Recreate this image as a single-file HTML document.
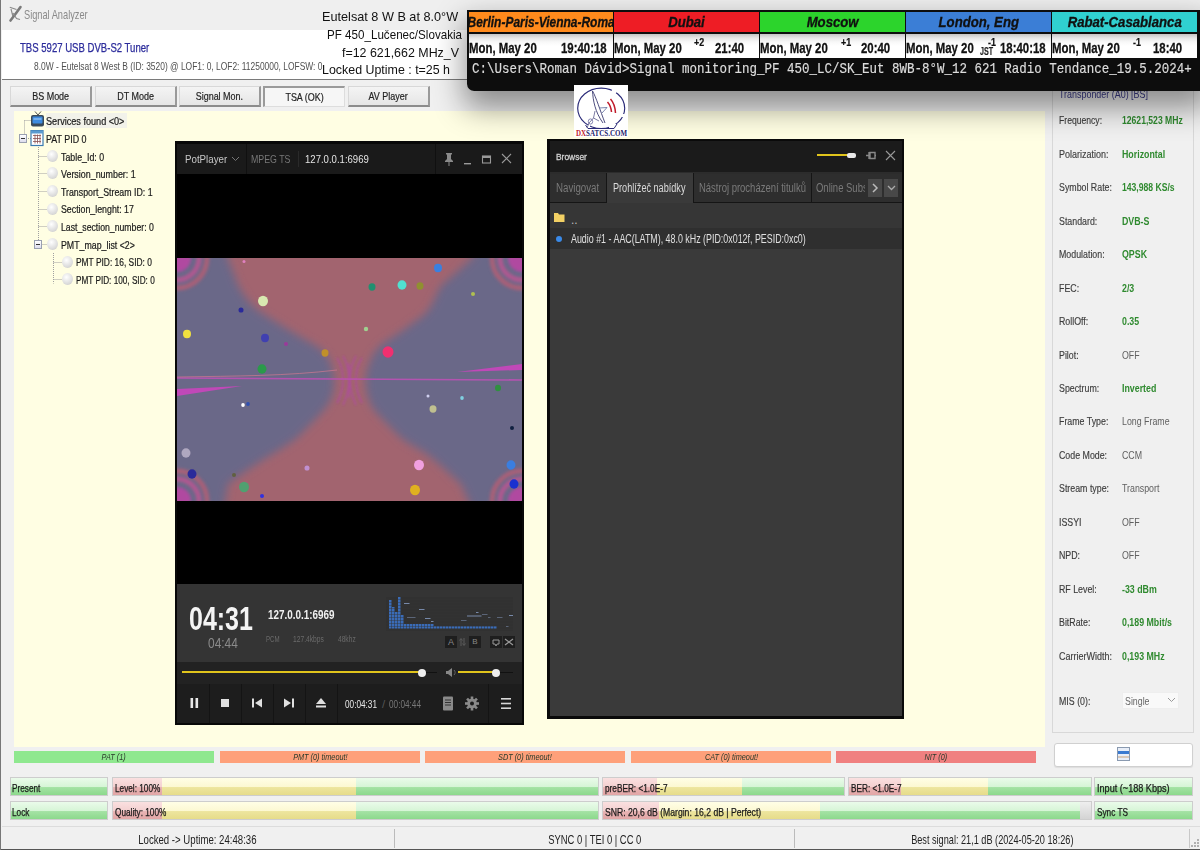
<!DOCTYPE html>
<html><head><meta charset="utf-8">
<style>
*{box-sizing:border-box;margin:0;padding:0}
html,body{width:1200px;height:850px;overflow:hidden;background:#f0f0f0;font-family:"Liberation Sans",sans-serif;}
.abs{position:absolute}
#win{position:absolute;left:0;top:0;width:1200px;height:850px;background:#f0f0f0;border-left:1px solid #777;}
#title{left:1px;top:0;width:1199px;height:30px;background:#efefef}
#hdr{left:1px;top:30px;width:1199px;height:50px;background:#fff;border-bottom:1px solid #7a7a7a}
.btn{position:absolute;top:86px;height:21px;width:82px;background:linear-gradient(#f4f4f4,#e6e6e6);border:1px solid #d8d8d8;border-bottom:2px solid #8c8c8c;border-right:2px solid #9a9a9a;font-size:11.5px;color:#222;text-align:center;line-height:19px;-webkit-text-stroke:.2px #222}
.btn.on{background:#f6f6f6;border-top:2px solid #9a9a9a;border-left:2px solid #9a9a9a;border-bottom:1px solid #ddd;border-right:1px solid #ddd}
#yel{left:13px;top:111px;width:1030.5px;height:636px;background:#fffee3}
.tree{position:absolute;font-size:11px;color:#222;white-space:nowrap}
.circ{position:absolute;width:11px;height:12px;border-radius:50%;background:radial-gradient(circle at 40% 35%,#fff,#d8d8d8 70%,#b8b8b8);}
.stat{position:absolute;top:751px;height:12px;width:200px;font-size:9.5px;font-style:italic;text-align:center;line-height:12px;color:#2a3a2a;white-space:nowrap}
.lbox{position:absolute;height:19px;border:1px solid #cfcfcf;font-size:11px;color:#111;line-height:18px;padding-left:2px;white-space:nowrap;overflow:hidden}
.g{background:linear-gradient(#f0fbf0 0%,#d8f2d8 50%,#8fd88f 52%,#9ede9e 100%)}
.rp{position:absolute;left:1058px;font-size:11px;color:#444;white-space:nowrap}
.rv{position:absolute;left:1120px;font-size:11px;color:#2a8a2a;font-weight:bold;white-space:nowrap}
.rv.n{color:#555;font-weight:normal}
.wh{font:italic bold 14px "Liberation Sans",sans-serif;color:#111;line-height:21px;white-space:nowrap;display:flex;justify-content:center;-webkit-text-stroke:.3px #111}
.wd{background:linear-gradient(#c4c4c4 0px,#e6e6e6 4px,#f8f8f8 8px,#fff 12px)}
.wdt{font:bold 15.5px "Liberation Sans",sans-serif;color:#111;white-space:nowrap;transform:scaleX(.735);transform-origin:0 0;-webkit-text-stroke:.3px #111}
.wsup{font:bold 10.5px "Liberation Sans",sans-serif;color:#111;transform:scaleX(.85);transform-origin:0 0;-webkit-text-stroke:.2px #111}
.ov{font-size:13px;color:#111;white-space:nowrap}
.ov span{display:inline-block;transform-origin:0 0}

.s{display:inline-block;transform-origin:0 0;white-space:nowrap}
.pp{position:absolute;white-space:nowrap}

.lg{background:linear-gradient(#eafbea 0%,#d6f5d6 52%,#a4e2a4 56%,#8cd98c 100%)}
.ly{background:linear-gradient(#fffee6 0%,#fcf8d2 52%,#ede59e 56%,#e6dc8a 100%)}
.lp{background:linear-gradient(#fae0e0 0%,#f4d0d0 52%,#e8b4b4 56%,#e2a6a6 100%)}
.lgr{background:linear-gradient(#eeeeee,#d4d4d4)}
</style></head><body>
<div id="win">
 <div id="title" class="abs">
  <svg class="abs" style="left:6px;top:5px" width="15" height="18" viewBox="0 0 15 18"><path d="M2.5,15.5 C6,11 9,7 12.5,2" stroke="#7a7a7a" stroke-width="2.6" stroke-linecap="round" fill="none"/><path d="M1.8,2.2 L8.5,4.5 M3,4 L4.8,11 M5,8 L8.5,13.5 L12,14.5" stroke="#8a8a8a" stroke-width="1.1" fill="none"/></svg>
  <div class="pp" style="left:22px;top:7px;font-size:13px;line-height:15px;color:#8a8a8a"><span class="s" style="transform:scaleX(.71)">Signal Analyzer</span></div>
 </div>
 <div id="hdr" class="abs">
  <div class="pp" style="left:18px;top:10.5px;font-size:12.3px;line-height:14px;color:#2b2b9b;-webkit-text-stroke:.25px #2b2b9b"><span class="s" style="transform:scaleX(.778)">TBS 5927 USB DVB-S2 Tuner</span></div>
  <div class="pp" style="left:31.5px;top:29.8px;font-size:10.8px;line-height:12px;color:#505050"><span class="s" style="transform:scaleX(.78)">8.0W - Eutelsat 8 West B (ID: 3520) @ LOF1: 0, LOF2: 11250000, LOFSW: 0</span></div>
 </div>
 <div class="abs ov" style="left:321px;top:9px;width:136px"><span style="transform:scaleX(.975)">Eutelsat 8 W B at 8.0°W</span></div>
 <div class="abs ov" style="left:326px;top:27px;width:135px"><span style="transform:scaleX(.894)">PF 450_Lučenec/Slovakia</span></div>
 <div class="abs ov" style="left:341px;top:44.5px;width:117px"><span style="transform:scaleX(.955)">f=12 621,662 MHz_V</span></div>
 <div class="abs ov" style="left:321px;top:62px;width:128px"><span style="transform:scaleX(.955)">Locked Uptime : t=25 h</span></div>

 <div class="btn" style="left:9px"><span class="s" style="transform:scaleX(.78);transform-origin:50% 0">BS Mode</span></div>
 <div class="btn" style="left:94px"><span class="s" style="transform:scaleX(.78);transform-origin:50% 0">DT Mode</span></div>
 <div class="btn" style="left:178px"><span class="s" style="transform:scaleX(.78);transform-origin:50% 0">Signal Mon.</span></div>
 <div class="btn on" style="left:262px"><span class="s" style="transform:scaleX(.78);transform-origin:50% 0">TSA (OK)</span></div>
 <div class="btn" style="left:347px"><span class="s" style="transform:scaleX(.78);transform-origin:50% 0">AV Player</span></div>

 <div id="yel" class="abs"></div>

 
<!-- tree -->
<div class="abs" style="left:45px;top:113px;width:81px;height:15px;background:#ececec;opacity:.7"></div>
<svg class="abs" style="left:13px;top:111px" width="70" height="180"><g stroke="#a0a0a0" stroke-width="1" stroke-dasharray="1 1" fill="none"><path d="M10.5,9.5 H17 M10.5,9.5 V24"/><path d="M12,27.5 H17"/><path d="M24.5,36 V137.5"/><path d="M24.5,45.5 H33"/><path d="M24.5,62.5 H33"/><path d="M24.5,80.5 H33"/><path d="M24.5,98.5 H33"/><path d="M24.5,115.5 H33"/><path d="M24.5,133.5 H33"/><path d="M39.5,142 V172.5"/><path d="M39.5,151.5 H48"/><path d="M39.5,168.5 H48"/></g></svg>
<div class="abs" style="left:18px;top:134px;width:8px;height:9px;border:1px solid #9aa0b0;background:linear-gradient(#fff,#dde)"><div style="position:absolute;left:1px;top:3px;width:4px;height:1px;background:#333"></div></div>
<div class="abs" style="left:33px;top:240px;width:8px;height:9px;border:1px solid #9aa0b0;background:linear-gradient(#fff,#dde)"><div style="position:absolute;left:1px;top:3px;width:4px;height:1px;background:#333"></div></div>
<div class="pp" style="left:45.0px;top:116.2px;font-size:10px;line-height:12px;color:#1a1a1a;-webkit-text-stroke:.2px #1a1a1a"><span class="s" style="transform:scaleX(0.91)">Services found &lt;0&gt;</span></div>
<div class="pp" style="left:45.0px;top:133.9px;font-size:10px;line-height:12px;color:#1a1a1a;-webkit-text-stroke:.2px #1a1a1a"><span class="s" style="transform:scaleX(0.89)">PAT PID 0</span></div>
<div class="pp" style="left:59.5px;top:151.5px;font-size:10px;line-height:12px;color:#1a1a1a;-webkit-text-stroke:.2px #1a1a1a"><span class="s" style="transform:scaleX(0.88)">Table_Id: 0</span></div>
<div class="circ" style="left:46px;top:149.8px"></div>
<div class="pp" style="left:59.5px;top:169.1px;font-size:10px;line-height:12px;color:#1a1a1a;-webkit-text-stroke:.2px #1a1a1a"><span class="s" style="transform:scaleX(0.89)">Version_number: 1</span></div>
<div class="circ" style="left:46px;top:167.4px"></div>
<div class="pp" style="left:59.5px;top:186.7px;font-size:10px;line-height:12px;color:#1a1a1a;-webkit-text-stroke:.2px #1a1a1a"><span class="s" style="transform:scaleX(0.88)">Transport_Stream ID: 1</span></div>
<div class="circ" style="left:46px;top:185.0px"></div>
<div class="pp" style="left:59.5px;top:204.3px;font-size:10px;line-height:12px;color:#1a1a1a;-webkit-text-stroke:.2px #1a1a1a"><span class="s" style="transform:scaleX(0.88)">Section_lenght: 17</span></div>
<div class="circ" style="left:46px;top:202.6px"></div>
<div class="pp" style="left:59.5px;top:222.0px;font-size:10px;line-height:12px;color:#1a1a1a;-webkit-text-stroke:.2px #1a1a1a"><span class="s" style="transform:scaleX(0.87)">Last_section_number: 0</span></div>
<div class="circ" style="left:46px;top:220.3px"></div>
<div class="pp" style="left:59.5px;top:239.7px;font-size:10px;line-height:12px;color:#1a1a1a;-webkit-text-stroke:.2px #1a1a1a"><span class="s" style="transform:scaleX(0.88)">PMT_map_list &lt;2&gt;</span></div>
<div class="circ" style="left:46px;top:238.0px"></div>
<div class="pp" style="left:74.7px;top:257.3px;font-size:10px;line-height:12px;color:#1a1a1a;-webkit-text-stroke:.2px #1a1a1a"><span class="s" style="transform:scaleX(0.84)">PMT PID: 16, SID: 0</span></div>
<div class="circ" style="left:61px;top:255.6px"></div>
<div class="pp" style="left:74.7px;top:275.0px;font-size:10px;line-height:12px;color:#1a1a1a;-webkit-text-stroke:.2px #1a1a1a"><span class="s" style="transform:scaleX(0.82)">PMT PID: 100, SID: 0</span></div>
<div class="circ" style="left:61px;top:273.3px"></div>
<svg class="abs" style="left:29px;top:111px" width="16" height="17"><path d="M5,0.5 L8,4 L11,0.5" stroke="#555" stroke-width="1" fill="none"/><rect x="1" y="4" width="13" height="11.5" rx="2" fill="#3a4a5a"/><rect x="2.5" y="5.5" width="10" height="7" rx="1" fill="#3d8be0"/><rect x="3.5" y="7" width="8" height="2" fill="#9ccaf5" opacity=".6"/></svg>
<svg class="abs" style="left:29px;top:130px" width="14" height="17"><rect x="1" y="0.5" width="12" height="15" fill="#fff" stroke="#3a7ab0" stroke-width="1.2"/><rect x="1" y="0.5" width="12" height="3" fill="#5a9ad0"/><g stroke="#8a5050" stroke-width=".8"><path d="M3,5.5 h8 M3,8.5 h8 M3,11.5 h8 M5,4.5 v9 M7.5,4.5 v9 M10,4.5 v9"/></g></svg>
<!-- rightpanel -->
<div class="abs" style="left:1044px;top:85px;width:156px;height:741px;background:#f0f0f0"></div>
<div class="abs" style="left:1051px;top:86px;width:142px;height:647px;border:1px solid #d8d8d8;border-top:none;background:#f0f0f0"></div>

<div class="pp" style="left:1057.5px;top:87.5px;font-size:10.5px;line-height:12px;color:#3a3a8a"><span class="s" style="transform:scaleX(.85)">Transponder (A0) [BS]</span></div>
<div class="pp" style="left:1057.5px;top:114.2px;font-size:10.5px;line-height:12px;color:#3c3c3c;-webkit-text-stroke:.15px #3c3c3c"><span class="s" style="transform:scaleX(0.82)">Frequency:</span></div>
<div class="pp" style="left:1120.5px;top:114.2px;font-size:10.5px;line-height:12px;color:#2f8a2f;font-weight:bold"><span class="s" style="transform:scaleX(0.82)">12621,523 MHz</span></div>
<div class="pp" style="left:1057.5px;top:147.6px;font-size:10.5px;line-height:12px;color:#3c3c3c;-webkit-text-stroke:.15px #3c3c3c"><span class="s" style="transform:scaleX(0.855)">Polarization:</span></div>
<div class="pp" style="left:1120.5px;top:147.6px;font-size:10.5px;line-height:12px;color:#2f8a2f;font-weight:bold"><span class="s" style="transform:scaleX(0.84)">Horizontal</span></div>
<div class="pp" style="left:1057.5px;top:181.1px;font-size:10.5px;line-height:12px;color:#3c3c3c;-webkit-text-stroke:.15px #3c3c3c"><span class="s" style="transform:scaleX(0.84)">Symbol Rate:</span></div>
<div class="pp" style="left:1120.5px;top:181.1px;font-size:10.5px;line-height:12px;color:#2f8a2f;font-weight:bold"><span class="s" style="transform:scaleX(0.82)">143,988 KS/s</span></div>
<div class="pp" style="left:1057.5px;top:214.6px;font-size:10.5px;line-height:12px;color:#3c3c3c;-webkit-text-stroke:.15px #3c3c3c"><span class="s" style="transform:scaleX(0.84)">Standard:</span></div>
<div class="pp" style="left:1120.5px;top:214.6px;font-size:10.5px;line-height:12px;color:#2f8a2f;font-weight:bold"><span class="s" style="transform:scaleX(0.84)">DVB-S</span></div>
<div class="pp" style="left:1057.5px;top:248.0px;font-size:10.5px;line-height:12px;color:#3c3c3c;-webkit-text-stroke:.15px #3c3c3c"><span class="s" style="transform:scaleX(0.84)">Modulation:</span></div>
<div class="pp" style="left:1120.5px;top:248.0px;font-size:10.5px;line-height:12px;color:#2f8a2f;font-weight:bold"><span class="s" style="transform:scaleX(0.84)">QPSK</span></div>
<div class="pp" style="left:1057.5px;top:281.5px;font-size:10.5px;line-height:12px;color:#3c3c3c;-webkit-text-stroke:.15px #3c3c3c"><span class="s" style="transform:scaleX(0.84)">FEC:</span></div>
<div class="pp" style="left:1120.5px;top:281.5px;font-size:10.5px;line-height:12px;color:#2f8a2f;font-weight:bold"><span class="s" style="transform:scaleX(0.84)">2/3</span></div>
<div class="pp" style="left:1057.5px;top:315.0px;font-size:10.5px;line-height:12px;color:#3c3c3c;-webkit-text-stroke:.15px #3c3c3c"><span class="s" style="transform:scaleX(0.84)">RollOff:</span></div>
<div class="pp" style="left:1120.5px;top:315.0px;font-size:10.5px;line-height:12px;color:#2f8a2f;font-weight:bold"><span class="s" style="transform:scaleX(0.84)">0.35</span></div>
<div class="pp" style="left:1057.5px;top:348.5px;font-size:10.5px;line-height:12px;color:#3c3c3c;-webkit-text-stroke:.15px #3c3c3c"><span class="s" style="transform:scaleX(0.84)">Pilot:</span></div>
<div class="pp" style="left:1120.5px;top:348.5px;font-size:10.5px;line-height:12px;color:#606060"><span class="s" style="transform:scaleX(0.84)">OFF</span></div>
<div class="pp" style="left:1057.5px;top:381.9px;font-size:10.5px;line-height:12px;color:#3c3c3c;-webkit-text-stroke:.15px #3c3c3c"><span class="s" style="transform:scaleX(0.84)">Spectrum:</span></div>
<div class="pp" style="left:1120.5px;top:381.9px;font-size:10.5px;line-height:12px;color:#2f8a2f;font-weight:bold"><span class="s" style="transform:scaleX(0.84)">Inverted</span></div>
<div class="pp" style="left:1057.5px;top:415.4px;font-size:10.5px;line-height:12px;color:#3c3c3c;-webkit-text-stroke:.15px #3c3c3c"><span class="s" style="transform:scaleX(0.84)">Frame Type:</span></div>
<div class="pp" style="left:1120.5px;top:415.4px;font-size:10.5px;line-height:12px;color:#606060"><span class="s" style="transform:scaleX(0.84)">Long Frame</span></div>
<div class="pp" style="left:1057.5px;top:448.9px;font-size:10.5px;line-height:12px;color:#3c3c3c;-webkit-text-stroke:.15px #3c3c3c"><span class="s" style="transform:scaleX(0.84)">Code Mode:</span></div>
<div class="pp" style="left:1120.5px;top:448.9px;font-size:10.5px;line-height:12px;color:#606060"><span class="s" style="transform:scaleX(0.84)">CCM</span></div>
<div class="pp" style="left:1057.5px;top:482.3px;font-size:10.5px;line-height:12px;color:#3c3c3c;-webkit-text-stroke:.15px #3c3c3c"><span class="s" style="transform:scaleX(0.84)">Stream type:</span></div>
<div class="pp" style="left:1120.5px;top:482.3px;font-size:10.5px;line-height:12px;color:#606060"><span class="s" style="transform:scaleX(0.84)">Transport</span></div>
<div class="pp" style="left:1057.5px;top:515.8px;font-size:10.5px;line-height:12px;color:#3c3c3c;-webkit-text-stroke:.15px #3c3c3c"><span class="s" style="transform:scaleX(0.84)">ISSYI</span></div>
<div class="pp" style="left:1120.5px;top:515.8px;font-size:10.5px;line-height:12px;color:#606060"><span class="s" style="transform:scaleX(0.84)">OFF</span></div>
<div class="pp" style="left:1057.5px;top:549.3px;font-size:10.5px;line-height:12px;color:#3c3c3c;-webkit-text-stroke:.15px #3c3c3c"><span class="s" style="transform:scaleX(0.84)">NPD:</span></div>
<div class="pp" style="left:1120.5px;top:549.3px;font-size:10.5px;line-height:12px;color:#606060"><span class="s" style="transform:scaleX(0.84)">OFF</span></div>
<div class="pp" style="left:1057.5px;top:582.7px;font-size:10.5px;line-height:12px;color:#3c3c3c;-webkit-text-stroke:.15px #3c3c3c"><span class="s" style="transform:scaleX(0.84)">RF Level:</span></div>
<div class="pp" style="left:1120.5px;top:582.7px;font-size:10.5px;line-height:12px;color:#2f8a2f;font-weight:bold"><span class="s" style="transform:scaleX(0.84)">-33 dBm</span></div>
<div class="pp" style="left:1057.5px;top:616.2px;font-size:10.5px;line-height:12px;color:#3c3c3c;-webkit-text-stroke:.15px #3c3c3c"><span class="s" style="transform:scaleX(0.84)">BitRate:</span></div>
<div class="pp" style="left:1120.5px;top:616.2px;font-size:10.5px;line-height:12px;color:#2f8a2f;font-weight:bold"><span class="s" style="transform:scaleX(0.84)">0,189 Mbit/s</span></div>
<div class="pp" style="left:1057.5px;top:649.7px;font-size:10.5px;line-height:12px;color:#3c3c3c;-webkit-text-stroke:.15px #3c3c3c"><span class="s" style="transform:scaleX(0.855)">CarrierWidth:</span></div>
<div class="pp" style="left:1120.5px;top:649.7px;font-size:10.5px;line-height:12px;color:#2f8a2f;font-weight:bold"><span class="s" style="transform:scaleX(0.84)">0,193 MHz</span></div>
<div class="pp" style="left:1057.5px;top:695.4px;font-size:10.5px;line-height:12px;color:#3c3c3c;-webkit-text-stroke:.15px #3c3c3c"><span class="s" style="transform:scaleX(.84)">MIS (0):</span></div>
<div class="abs" style="left:1121px;top:692px;width:57px;height:17px;background:#f9f9f9;border:1px solid #eee"></div>
<div class="pp" style="left:1124px;top:695.4px;font-size:10.5px;line-height:12px;color:#666"><span class="s" style="transform:scaleX(.84)">Single</span></div>
<svg class="abs" style="left:1166px;top:697px" width="9" height="6"><path d="M1,1 L4.5,4.5 L8,1" stroke="#999" fill="none"/></svg>
<div class="abs" style="left:1052.5px;top:742.5px;width:139.5px;height:24px;background:#fff;border:1px solid #d0d0d0;border-radius:3px;box-shadow:0 1px 1px rgba(0,0,0,.08)"></div>
<svg class="abs" style="left:1116px;top:747px" width="13" height="14"><rect x=".5" y=".5" width="12" height="13" fill="#e8eef8" stroke="#8a9ab0"/><rect x="1" y="4" width="11" height="3" fill="#3a7ad0"/><rect x="1" y="9" width="11" height="2" fill="#d8c8b8"/></svg>

 <div class="abs" style="left:466px;top:10px;width:740px;height:81px;border-radius:0 0 0 7px;box-shadow:0 14px 30px 3px rgba(0,0,0,.42)"></div>
<!-- levels -->
<div class="abs" style="left:9px;top:777px;width:98px;height:19px;border:1px solid #cdcdcd;overflow:hidden;background:#e8e8e8"><div class="abs lg" style="left:-1.0px;top:0;width:97.5px;height:17px"></div><div class="pp" style="left:.5px;top:5px;font-size:10.2px;line-height:12px;color:#1a1a1a;-webkit-text-stroke:.25px #1a1a1a"><span class="s" style="transform:scaleX(0.809)">Present</span></div></div>
<div class="abs" style="left:9px;top:801px;width:98px;height:19px;border:1px solid #cdcdcd;overflow:hidden;background:#e8e8e8"><div class="abs lg" style="left:-1.0px;top:0;width:97.5px;height:17px"></div><div class="pp" style="left:.5px;top:5px;font-size:10.2px;line-height:12px;color:#1a1a1a;-webkit-text-stroke:.25px #1a1a1a"><span class="s" style="transform:scaleX(0.809)">Lock</span></div></div>
<div class="abs" style="left:110.8px;top:777px;width:487.5px;height:19px;border:1px solid #cdcdcd;overflow:hidden;background:#e8e8e8"><div class="abs lp" style="left:-1.0px;top:0;width:49.9px;height:17px"></div><div class="abs ly" style="left:48.9px;top:0;width:194.1px;height:17px"></div><div class="abs lg" style="left:243.0px;top:0;width:243.5px;height:17px"></div><div class="pp" style="left:2px;top:5px;font-size:10.2px;line-height:12px;color:#1a1a1a;-webkit-text-stroke:.25px #1a1a1a"><span class="s" style="transform:scaleX(0.809)">Level: 100%</span></div></div>
<div class="abs" style="left:110.8px;top:801px;width:487.5px;height:19px;border:1px solid #cdcdcd;overflow:hidden;background:#e8e8e8"><div class="abs lp" style="left:-1.0px;top:0;width:49.9px;height:17px"></div><div class="abs ly" style="left:48.9px;top:0;width:194.1px;height:17px"></div><div class="abs lg" style="left:243.0px;top:0;width:243.5px;height:17px"></div><div class="pp" style="left:2px;top:5px;font-size:10.2px;line-height:12px;color:#1a1a1a;-webkit-text-stroke:.25px #1a1a1a"><span class="s" style="transform:scaleX(0.809)">Quality: 100%</span></div></div>
<div class="abs" style="left:601px;top:777px;width:242.6px;height:19px;border:1px solid #cdcdcd;overflow:hidden;background:#e8e8e8"><div class="abs lp" style="left:-1.0px;top:0;width:54.5px;height:17px"></div><div class="abs ly" style="left:53.5px;top:0;width:85.7px;height:17px"></div><div class="abs lg" style="left:139.2px;top:0;width:102.4px;height:17px"></div><div class="pp" style="left:2px;top:5px;font-size:10.2px;line-height:12px;color:#1a1a1a;-webkit-text-stroke:.25px #1a1a1a"><span class="s" style="transform:scaleX(0.809)">preBER: &lt;1.0E-7</span></div></div>
<div class="abs" style="left:847.1px;top:777px;width:243.6px;height:19px;border:1px solid #cdcdcd;overflow:hidden;background:#e8e8e8"><div class="abs lp" style="left:-1.0px;top:0;width:52.9px;height:17px"></div><div class="abs ly" style="left:51.9px;top:0;width:87.3px;height:17px"></div><div class="abs lg" style="left:139.2px;top:0;width:103.4px;height:17px"></div><div class="pp" style="left:2px;top:5px;font-size:10.2px;line-height:12px;color:#1a1a1a;-webkit-text-stroke:.25px #1a1a1a"><span class="s" style="transform:scaleX(0.809)">BER: &lt;1.0E-7</span></div></div>
<div class="abs" style="left:1093.2px;top:777px;width:98.8px;height:19px;border:1px solid #cdcdcd;overflow:hidden;background:#e8e8e8"><div class="abs lg" style="left:-1.0px;top:0;width:99.4px;height:17px"></div><div class="pp" style="left:2px;top:5px;font-size:10.2px;line-height:12px;color:#1a1a1a;-webkit-text-stroke:.25px #1a1a1a"><span class="s" style="transform:scaleX(0.894)">Input (~188 Kbps)</span></div></div>
<div class="abs" style="left:601px;top:801px;width:489.7px;height:19px;border:1px solid #cdcdcd;overflow:hidden;background:#e8e8e8"><div class="abs lp" style="left:-1.0px;top:0;width:57.0px;height:17px"></div><div class="abs ly" style="left:56.0px;top:0;width:161.4px;height:17px"></div><div class="abs lg" style="left:217.4px;top:0;width:259.6px;height:17px"></div><div class="abs lgr" style="left:477.0px;top:0;width:11.7px;height:17px"></div><div class="pp" style="left:2px;top:5px;font-size:10.2px;line-height:12px;color:#1a1a1a;-webkit-text-stroke:.25px #1a1a1a"><span class="s" style="transform:scaleX(0.847)">SNR: 20,6 dB (Margin: 16,2 dB | Perfect)</span></div></div>
<div class="abs" style="left:1093.2px;top:801px;width:98.8px;height:19px;border:1px solid #cdcdcd;overflow:hidden;background:#e8e8e8"><div class="abs lg" style="left:-1.0px;top:0;width:99.4px;height:17px"></div><div class="pp" style="left:2px;top:5px;font-size:10.2px;line-height:12px;color:#1a1a1a;-webkit-text-stroke:.25px #1a1a1a"><span class="s" style="transform:scaleX(0.809)">Sync TS</span></div></div>
<!-- potplayer -->
<div class="abs" style="left:174px;top:141px;width:349px;height:584px;background:#000;border:2px solid #080808;border-top-width:3px"></div>
<div class="abs" style="left:176px;top:144px;width:345px;height:30px;background:#1a1a1a"></div>
<div class="abs" style="left:245px;top:144px;width:1px;height:30px;background:#101010"></div>
<div class="abs" style="left:297px;top:151px;width:1px;height:16px;background:#2a2a2a"></div>
<div class="abs" style="left:434px;top:144px;width:1px;height:30px;background:#101010"></div>
<div class="pp" style="left:183.5px;top:152px;font-size:11.6px;color:#c8c8c8"><span class="s" style="transform:scaleX(.84)">PotPlayer</span></div>
<svg class="abs" style="left:230px;top:156px" width="9" height="6"><path d="M1,1 L4.5,4.5 L8,1" stroke="#777" fill="none" stroke-width="1"/></svg>
<div class="pp" style="left:249.5px;top:152px;font-size:11.6px;color:#777"><span class="s" style="transform:scaleX(.76)">MPEG TS</span></div>
<div class="pp" style="left:304px;top:152px;font-size:11.6px;color:#e4e4e4"><span class="s" style="transform:scaleX(.825)">127.0.0.1:6969</span></div>
<svg class="abs" style="left:442px;top:152px" width="70" height="14">
 <path d="M3,1 h6 v1 l-1,1 v4 l2,2 v1 h-8 v-1 l2,-2 v-4 l-1,-1 z M5.5,10 v4 h1 v-4z" fill="#8a8a8a"/>
 <rect x="21" y="11" width="7" height="1.4" fill="#9a9a9a"/>
 <rect x="39.5" y="4" width="8" height="7" fill="none" stroke="#9a9a9a" stroke-width="1.1"/><rect x="39.5" y="4" width="8" height="2" fill="#9a9a9a"/>
 <path d="M59,2 L68,11 M68,2 L59,11" stroke="#9a9a9a" stroke-width="1.1"/>
</svg>
<svg class="abs" style="left:176px;top:258px" width="345" height="243" viewBox="0 0 345 243">
<defs><filter id="bl" x="-20%" y="-20%" width="140%" height="140%"><feGaussianBlur stdDeviation="4"/></filter>
<filter id="bl2"><feGaussianBlur stdDeviation="1.2"/></filter>
<radialGradient id="cn" cx="0" cy="0" r="1"><stop offset="0" stop-color="#c040b0"/><stop offset=".5" stop-color="#b05080"/><stop offset="1" stop-color="#a0606e" stop-opacity="0"/></radialGradient></defs>
<rect width="345" height="243" fill="#a2646f"/>
<g filter="url(#bl)">
<path d="M-20,-20 L50,-20 L50,-2 C55,10 58,20 62,29 C68,40 76,50 88,57 C105,68 122,78 136,86 C146,92 151,97 153,104 C157,114 158,122 157,130 C156,138 152,146 147,152 C138,162 130,170 120,180 C112,186 105,190 99,194 C80,205 62,218 51,226 L45,263 L-20,263 Z" fill="#6a6888"/>
<path d="M365,-20 L297,-20 L297,-2 C285,10 272,20 263,29 C258,40 254,50 247,57 C232,68 218,78 205,86 C199,92 195,97 193,104 C189,112 188,122 189,130 C190,138 193,146 197,152 C206,162 214,170 224,180 C232,186 240,190 247,194 C262,205 275,218 284,226 L300,263 L365,263 Z" fill="#6a6888"/>
</g>
<g filter="url(#bl2)" fill="none">
<g filter="url(#bl2)"><g fill="none" stroke-width="5"><circle cx="0" cy="0" r="30" stroke="#a86078"/><circle cx="345" cy="0" r="30" stroke="#a86078"/><circle cx="0" cy="243" r="30" stroke="#a86078"/><circle cx="345" cy="243" r="30" stroke="#a86078"/>
<circle cx="0" cy="0" r="22" stroke="#b05890"/><circle cx="345" cy="0" r="22" stroke="#b05890"/><circle cx="0" cy="243" r="22" stroke="#b05890"/><circle cx="345" cy="243" r="22" stroke="#b05890"/></g>
<circle cx="0" cy="0" r="14" fill="#b04aa0"/><circle cx="345" cy="0" r="14" fill="#b04aa0"/><circle cx="0" cy="243" r="14" fill="#b04aa0"/><circle cx="345" cy="243" r="14" fill="#b04aa0"/></g>
</g>
<g filter="url(#bl2)" stroke="#b048a8" fill="none" stroke-width="1.2" opacity=".9">
<path d="M160,100 C168,112 168,130 160,145"/><path d="M166,98 C174,112 174,130 166,147"/><path d="M185,100 C177,112 177,130 185,145"/><path d="M179,98 C171,112 171,130 179,147"/><path d="M172,105 L172,140"/>
</g>
<path d="M0,120 L345,122" stroke="#c050b8" stroke-width="1.6" opacity=".85"/>
<path d="M0,119 C60,118 110,118 160,112" stroke="#d07890" stroke-width="1" fill="none" opacity=".7"/>
<path d="M0,131 L65,128 L0,138 Z" fill="#c048b8"/>
<path d="M345,106 L280,114 L345,112 Z" fill="#c048b8"/>
<ellipse cx="86" cy="43" rx="5" ry="5.2" fill="#d8e8b0"/><ellipse cx="64" cy="52" rx="2.5" ry="2.6" fill="#2a2a9a"/><ellipse cx="10" cy="76" rx="4" ry="4.2" fill="#f0e040"/><ellipse cx="88" cy="80" rx="4" ry="4.2" fill="#4040b0"/><ellipse cx="109" cy="86" rx="2" ry="2.1" fill="#9a3a9a"/><ellipse cx="85" cy="111" rx="4.5" ry="4.7" fill="#2a9a4a"/><ellipse cx="148" cy="95" rx="3.5" ry="3.7" fill="#c0902a"/><ellipse cx="195" cy="29" rx="3.5" ry="3.7" fill="#209070"/><ellipse cx="225" cy="27" rx="4.5" ry="4.7" fill="#50e0d0"/><ellipse cx="243" cy="28" rx="3.5" ry="3.7" fill="#909030"/><ellipse cx="261" cy="10" rx="4" ry="4.2" fill="#3a80e0"/><ellipse cx="296" cy="36" rx="2" ry="2.1" fill="#b0c050"/><ellipse cx="189" cy="71" rx="2.2" ry="2.3" fill="#a0d090"/><ellipse cx="211" cy="94" rx="5.5" ry="5.8" fill="#f03070"/><ellipse cx="67" cy="3.5" rx="1.5" ry="1.6" fill="#e080c0"/><ellipse cx="66" cy="147" rx="1.8" ry="1.9" fill="#ffffff"/><ellipse cx="71" cy="146" rx="1.8" ry="1.9" fill="#3050b0"/><ellipse cx="251" cy="138" rx="1.5" ry="1.6" fill="#d0d0f0"/><ellipse cx="285" cy="140" rx="1.8" ry="1.9" fill="#80d0e0"/><ellipse cx="256" cy="151" rx="3.5" ry="3.7" fill="#c0c090"/><ellipse cx="321" cy="130" rx="3" ry="3.2" fill="#309040"/><ellipse cx="335" cy="170" rx="2" ry="2.1" fill="#102040"/><ellipse cx="9" cy="195" rx="4.5" ry="4.7" fill="#b0a8c0"/><ellipse cx="15" cy="216" rx="4.5" ry="4.7" fill="#2a2a9a"/><ellipse cx="57" cy="217" rx="2" ry="2.1" fill="#606040"/><ellipse cx="67" cy="229" rx="5" ry="5.2" fill="#50a070"/><ellipse cx="85" cy="238" rx="2" ry="2.1" fill="#3030e0"/><ellipse cx="130" cy="210" rx="2.5" ry="2.6" fill="#c090d0"/><ellipse cx="242" cy="207" rx="5" ry="5.2" fill="#f0a0e0"/><ellipse cx="238" cy="232" rx="5" ry="5.2" fill="#e0b020"/><ellipse cx="334" cy="207" rx="4.5" ry="4.7" fill="#3a7ee0"/><ellipse cx="337" cy="226" rx="4.5" ry="4.7" fill="#1a30d0"/>
</svg>
<!-- info panel -->
<div class="abs" style="left:176px;top:584px;width:345px;height:78px;background:#343434"></div>
<div class="pp" style="left:188px;top:598.5px;font-size:34px;font-weight:bold;color:#f4f4f4;line-height:38px"><span class="s" style="transform:scaleX(.735)">04:31</span></div>
<div class="pp" style="left:206.5px;top:634px;font-size:15.5px;color:#8a8a8a;line-height:17px"><span class="s" style="transform:scaleX(.77)">04:44</span></div>
<div class="pp" style="left:266.5px;top:607.5px;font-size:12.6px;font-weight:bold;color:#f0f0f0;line-height:14px"><span class="s" style="transform:scaleX(.785)">127.0.0.1:6969</span></div>
<div class="pp" style="left:264.5px;top:634px;font-size:8.5px;color:#6a6a6a;line-height:10px"><span class="s" style="transform:scaleX(.72)">PCM</span></div>
<div class="pp" style="left:292px;top:634px;font-size:8.5px;color:#6a6a6a;line-height:10px"><span class="s" style="transform:scaleX(.785)">127.4kbps</span></div>
<div class="pp" style="left:337px;top:634px;font-size:8.5px;color:#6a6a6a;line-height:10px"><span class="s" style="transform:scaleX(.78)">48khz</span></div>
<svg class="abs" style="left:385px;top:597px" width="127" height="34"><rect width="127" height="34" fill="#2e2e2e" opacity=".5"/><rect x="3" y="3" width="2.5" height="28.5" fill="#3a6cb8"/><rect x="6" y="10" width="2.5" height="21.5" fill="#3a6cb8"/><rect x="9" y="15" width="2.5" height="16.5" fill="#3a6cb8"/><rect x="12" y="0" width="2.5" height="31.5" fill="#3a6cb8"/><rect x="15" y="18" width="2.5" height="13.5" fill="#3a6cb8"/><rect x="18" y="27" width="2.5" height="4.5" fill="#3a6cb8"/><rect x="21" y="27" width="2.5" height="4.5" fill="#3a6cb8"/><rect x="24" y="27" width="2.5" height="4.5" fill="#3a6cb8"/><rect x="27" y="27" width="2.5" height="4.5" fill="#3a6cb8"/><rect x="30" y="27" width="2.5" height="4.5" fill="#3a6cb8"/><rect x="33" y="27" width="2.5" height="4.5" fill="#3a6cb8"/><rect x="36" y="27" width="2.5" height="4.5" fill="#3a6cb8"/><rect x="39" y="27" width="2.5" height="4.5" fill="#3a6cb8"/><rect x="42" y="27" width="2.5" height="4.5" fill="#3a6cb8"/><rect x="45" y="27" width="2.5" height="4.5" fill="#3a6cb8"/><rect x="48" y="29" width="2.5" height="2.5" fill="#3a6cb8"/><rect x="51" y="29" width="2.5" height="2.5" fill="#3a6cb8"/><rect x="54" y="29" width="2.5" height="2.5" fill="#3a6cb8"/><rect x="57" y="29" width="2.5" height="2.5" fill="#3a6cb8"/><rect x="60" y="29" width="2.5" height="2.5" fill="#3a6cb8"/><rect x="63" y="29" width="2.5" height="2.5" fill="#3a6cb8"/><rect x="66" y="29" width="2.5" height="2.5" fill="#3a6cb8"/><rect x="69" y="29" width="2.5" height="2.5" fill="#3a6cb8"/><rect x="72" y="29" width="2.5" height="2.5" fill="#3a6cb8"/><rect x="75" y="29" width="2.5" height="2.5" fill="#3a6cb8"/><rect x="78" y="29" width="2.5" height="2.5" fill="#3a6cb8"/><rect x="81" y="29" width="2.5" height="2.5" fill="#3a6cb8"/><rect x="84" y="29" width="2.5" height="2.5" fill="#3a6cb8"/><rect x="87" y="29" width="2.5" height="2.5" fill="#3a6cb8"/><rect x="90" y="29" width="2.5" height="2.5" fill="#3a6cb8"/><rect x="93" y="29" width="2.5" height="2.5" fill="#3a6cb8"/><rect x="96" y="29" width="2.5" height="2.5" fill="#3a6cb8"/><rect x="99" y="29" width="2.5" height="2.5" fill="#3a6cb8"/><rect x="102" y="29" width="2.5" height="2.5" fill="#3a6cb8"/><rect x="105" y="29" width="2.5" height="2.5" fill="#3a6cb8"/><rect x="108" y="29" width="2.5" height="2.5" fill="#3a6cb8"/><rect x="18" y="6" width="5.5" height="1" fill="#8aa0c8" opacity=".8"/><rect x="21" y="20" width="8.5" height="1" fill="#8aa0c8" opacity=".8"/><rect x="33" y="12" width="5.5" height="1" fill="#8aa0c8" opacity=".8"/><rect x="39" y="21" width="5.5" height="1" fill="#8aa0c8" opacity=".8"/><rect x="45" y="24" width="2.5" height="1" fill="#8aa0c8" opacity=".8"/><rect x="75" y="23" width="5.5" height="1" fill="#8aa0c8" opacity=".8"/><rect x="81" y="18.5" width="14.5" height="1" fill="#8aa0c8" opacity=".8"/><rect x="90" y="15" width="2.5" height="1" fill="#8aa0c8" opacity=".8"/><rect x="96" y="17" width="5.5" height="1" fill="#8aa0c8" opacity=".8"/><rect x="102" y="20" width="2.5" height="1" fill="#8aa0c8" opacity=".8"/><rect x="111" y="20" width="5.5" height="1" fill="#8aa0c8" opacity=".8"/><rect x="123" y="18" width="5.5" height="1" fill="#8aa0c8" opacity=".8"/><rect x="120" y="29" width="2.5" height="1" fill="#8aa0c8" opacity=".8"/><rect x="0" y="2" width="127" height="0.6" fill="#343434" opacity=".7"/><rect x="0" y="5" width="127" height="0.6" fill="#343434" opacity=".7"/><rect x="0" y="8" width="127" height="0.6" fill="#343434" opacity=".7"/><rect x="0" y="11" width="127" height="0.6" fill="#343434" opacity=".7"/><rect x="0" y="14" width="127" height="0.6" fill="#343434" opacity=".7"/><rect x="0" y="17" width="127" height="0.6" fill="#343434" opacity=".7"/><rect x="0" y="20" width="127" height="0.6" fill="#343434" opacity=".7"/><rect x="0" y="23" width="127" height="0.6" fill="#343434" opacity=".7"/><rect x="0" y="26" width="127" height="0.6" fill="#343434" opacity=".7"/><rect x="0" y="29" width="127" height="0.6" fill="#343434" opacity=".7"/><rect x="0" y="32" width="127" height="0.6" fill="#343434" opacity=".7"/></svg>
<div class="abs" style="left:444px;top:636px;width:12px;height:12px;background:#1e1e1e;color:#888;font-size:9px;text-align:center;line-height:12px">A</div>
<svg class="abs" style="left:457px;top:636px" width="9" height="12"><path d="M3,10 V3 M1.5,4.5 L3,2.5 L4.5,4.5 M6,2 V9 M4.5,7.5 L6,9.5 L7.5,7.5" stroke="#5a5a5a" stroke-width="1" fill="none"/></svg>
<div class="abs" style="left:468px;top:636px;width:12px;height:12px;background:#1e1e1e;color:#888;font-size:8px;text-align:center;line-height:12px">B</div>
<div class="abs" style="left:489px;top:636px;width:12px;height:12px;background:#1e1e1e"></div>
<div class="abs" style="left:502px;top:636px;width:12px;height:12px;background:#1e1e1e"></div>
<svg class="abs" style="left:489px;top:636px" width="26" height="12"><path d="M3,8 v-4 h6 v4 h-2 l-1,2 l-1,-2z" stroke="#999" fill="none" stroke-width="1"/><path d="M15,3 L23,9 M15,9 L23,3" stroke="#999" stroke-width="1.2"/></svg>
<!-- seek -->
<div class="abs" style="left:176px;top:662px;width:345px;height:22px;background:#222"></div>
<div class="abs" style="left:181px;top:671px;width:240px;height:2px;background:#e0c41c"></div>
<div class="abs" style="left:421px;top:671.5px;width:15px;height:1px;background:#111"></div>
<div class="abs" style="left:417px;top:668.5px;width:8px;height:8px;border-radius:50%;background:#eee"></div>
<svg class="abs" style="left:444px;top:667px" width="12" height="11"><path d="M1,4 h2 l4,-3 v9 l-4,-3 h-2z" fill="#888"/><path d="M9,3 C10.5,4.5 10.5,6.5 9,8" stroke="#666" fill="none"/></svg>
<div class="abs" style="left:457px;top:671px;width:37px;height:2px;background:#e0c41c"></div>
<div class="abs" style="left:494px;top:671.5px;width:18px;height:1px;background:#111"></div>
<div class="abs" style="left:490.5px;top:668.5px;width:8px;height:8px;border-radius:50%;background:#eee"></div>
<!-- controls -->
<div class="abs" style="left:176px;top:684px;width:345px;height:39px;background:#1d1d1d"></div>
<div class="abs" style="left:208px;top:684px;width:1px;height:39px;background:#141414"></div>
<div class="abs" style="left:240px;top:684px;width:1px;height:39px;background:#141414"></div>
<div class="abs" style="left:272px;top:684px;width:1px;height:39px;background:#141414"></div>
<div class="abs" style="left:304px;top:684px;width:1px;height:39px;background:#141414"></div>
<div class="abs" style="left:336px;top:684px;width:1px;height:39px;background:#141414"></div>
<div class="abs" style="left:487px;top:684px;width:1px;height:39px;background:#141414"></div>
<svg class="abs" style="left:176px;top:684px" width="345" height="39">
 <rect x="13.5" y="14" width="2.6" height="10" fill="#e8e8e8"/><rect x="18.5" y="14" width="2.6" height="10" fill="#e8e8e8"/>
 <rect x="44" y="15" width="8" height="8" fill="#e0e0e0"/>
 <rect x="75" y="14.5" width="2" height="9" fill="#e0e0e0"/><path d="M85,14.5 v9 l-7,-4.5z" fill="#e0e0e0"/>
 <path d="M107,14.5 v9 l7,-4.5z" fill="#e0e0e0"/><rect x="115" y="14.5" width="2" height="9" fill="#e0e0e0"/>
 <path d="M139,20 l5,-6 l5,6z" fill="#e0e0e0"/><rect x="139" y="21.5" width="10" height="2" fill="#e0e0e0"/>
 <rect x="266" y="12.5" width="10" height="14" rx="1" fill="#8a8a8a"/><rect x="268" y="15.5" width="6" height="1" fill="#333"/><rect x="268" y="18" width="6" height="1" fill="#333"/><rect x="268" y="20.5" width="6" height="1" fill="#333"/>
 <g transform="translate(295,19.5)" fill="#8a8a8a"><rect x="-1.3" y="-7" width="2.6" height="14" transform="rotate(0)"/><rect x="-1.3" y="-7" width="2.6" height="14" transform="rotate(45)"/><rect x="-1.3" y="-7" width="2.6" height="14" transform="rotate(90)"/><rect x="-1.3" y="-7" width="2.6" height="14" transform="rotate(135)"/><circle r="4.8"/><circle r="2" fill="#1d1d1d"/></g>
 <rect x="324" y="14" width="10" height="1.6" fill="#d8d8d8"/><rect x="324" y="18.7" width="10" height="1.6" fill="#d8d8d8"/><rect x="324" y="23.4" width="10" height="1.6" fill="#d8d8d8"/>
</svg>
<div class="pp" style="left:344px;top:698px;font-size:11.5px;color:#e8e8e8;line-height:13px"><span class="s" style="transform:scaleX(.715)">00:04:31</span></div>
<div class="pp" style="left:381px;top:698px;font-size:11.5px;color:#555;line-height:13px">/</div>
<div class="pp" style="left:388px;top:698px;font-size:11.5px;color:#777;line-height:13px"><span class="s" style="transform:scaleX(.715)">00:04:44</span></div>


<!-- browser -->
<div class="abs" style="left:546px;top:139px;width:357px;height:580px;background:#0a0a0a"></div>
<div class="abs" style="left:549px;top:141px;width:352px;height:31px;background:#1b1b1b"></div>
<div class="pp" style="left:554.5px;top:150.5px;font-size:9.8px;color:#d4d4d4;line-height:11px;-webkit-text-stroke:.3px #d4d4d4"><span class="s" style="transform:scaleX(.86)">Browser</span></div>
<div class="abs" style="left:816px;top:154px;width:36px;height:2px;background:#e0c41c"></div>
<div class="abs" style="left:846px;top:152.5px;width:9px;height:5px;border-radius:2px;background:#e8e8e8"></div>
<svg class="abs" style="left:864px;top:149px" width="32" height="13"><path d="M1,6.5 h3 M4,3 v7 M5,3.5 h5 v6 h-5z M10,6.5 h1" stroke="#888" stroke-width="1.4" fill="none"/><path d="M21,2 L30,11 M30,2 L21,11" stroke="#999" stroke-width="1.1"/></svg>
<div class="abs" style="left:549px;top:172px;width:352px;height:31px;background:#2c2c2c"></div>
<div class="abs" style="left:549px;top:174px;width:56px;height:28px;background:#2e2e2e"></div>
<div class="abs" style="left:606px;top:173px;width:86px;height:30px;background:#3a3a3a"></div>
<div class="abs" style="left:693px;top:174px;width:117px;height:28px;background:#2e2e2e"></div>
<div class="abs" style="left:811px;top:174px;width:90px;height:28px;background:#2e2e2e"></div>
<div class="abs" style="left:605px;top:173px;width:1px;height:30px;background:#151515"></div>
<div class="abs" style="left:692px;top:173px;width:1px;height:30px;background:#151515"></div>
<div class="abs" style="left:810px;top:173px;width:1px;height:30px;background:#151515"></div>
<div class="abs" style="left:549px;top:202px;width:57px;height:1px;background:#151515"></div>
<div class="abs" style="left:692px;top:202px;width:209px;height:1px;background:#151515"></div>
<div class="pp" style="left:555px;top:181px;font-size:12px;color:#7a7a7a;line-height:14px"><span class="s" style="transform:scaleX(.81)">Navigovat</span></div>
<div class="pp" style="left:612px;top:181px;font-size:12px;color:#dadada;line-height:14px"><span class="s" style="transform:scaleX(.76)">Prohlížeč nabídky</span></div>
<div class="pp" style="left:697.5px;top:181px;font-size:12px;color:#7a7a7a;line-height:14px"><span class="s" style="transform:scaleX(.79)">Nástroj procházení titulků</span></div>
<div class="pp" style="left:814.5px;top:181px;width:49.5px;overflow:hidden;font-size:12px;color:#7a7a7a;line-height:14px"><span class="s" style="transform:scaleX(.79)">Online Subs</span></div>
<div class="abs" style="left:867px;top:179px;width:14px;height:18px;background:#484848"></div>
<div class="abs" style="left:883px;top:179px;width:14px;height:18px;background:#484848"></div>
<svg class="abs" style="left:867px;top:179px" width="30" height="18"><path d="M5,5 L9,9 L5,13" stroke="#bbb" stroke-width="1.5" fill="none"/><path d="M20,7 L23.5,10.5 L27,7" stroke="#aaa" stroke-width="1.3" fill="none"/></svg>
<div class="abs" style="left:549px;top:203px;width:352px;height:513px;background:#3a3a3a"></div>
<div class="abs" style="left:549px;top:203px;width:352px;height:25px;background:#363636"></div>
<div class="abs" style="left:549px;top:228px;width:352px;height:21px;background:#2f2f2f"></div>
<svg class="abs" style="left:553px;top:212px" width="12" height="10"><path d="M0,1 h4 l1,1.5 h5.5 v7.5 h-10.5z" fill="#f2d064"/></svg>
<div class="pp" style="left:570px;top:213px;font-size:12px;color:#bbb;line-height:14px">..</div>
<div class="abs" style="left:555px;top:236px;width:6px;height:6px;border-radius:50%;background:#3a8ae8"></div>
<div class="pp" style="left:570px;top:232px;font-size:12px;color:#e0e0e0;line-height:14px"><span class="s" style="transform:scaleX(.74)">Audio #1 - AAC(LATM), 48.0 kHz (PID:0x012f, PESID:0xc0)</span></div>


<!-- worldclock -->
<div class="abs" style="left:466px;top:10px;width:740px;height:81px;background:#0d0d0d;border-radius:0 0 0 7px"></div>
<div class="abs" style="left:468px;top:12px;width:144px;height:20px;background:#ff8a1c;overflow:hidden"><div class="wh"><span style="display:inline-block;transform:scaleX(0.855)">Berlin-Paris-Vienna-Roma</span></div></div>
<div class="abs wd" style="left:468px;top:34px;width:144px;height:24px"></div>
<div class="abs wdt" style="left:467.5px;top:38.5px">Mon, May 20</div>
<div class="abs wdt" style="left:560.4px;top:38.5px">19:40:18</div>
<div class="abs" style="left:613px;top:12px;width:145px;height:20px;background:#ee1d25;overflow:hidden"><div class="wh"><span style="display:inline-block;transform:scaleX(0.94)">Dubai</span></div></div>
<div class="abs wd" style="left:613px;top:34px;width:145px;height:24px"></div>
<div class="abs wdt" style="left:612.5px;top:38.5px">Mon, May 20</div>
<div class="abs wdt" style="left:713.7px;top:38.5px">21:40</div>
<div class="abs wsup" style="left:692.8px;top:35.5px">+2</div>
<div class="abs" style="left:759px;top:12px;width:145px;height:20px;background:#2cd42c;overflow:hidden"><div class="wh"><span style="display:inline-block;transform:scaleX(0.94)">Moscow</span></div></div>
<div class="abs wd" style="left:759px;top:34px;width:145px;height:24px"></div>
<div class="abs wdt" style="left:758.5px;top:38.5px">Mon, May 20</div>
<div class="abs wdt" style="left:860.3px;top:38.5px">20:40</div>
<div class="abs wsup" style="left:840px;top:35.5px">+1</div>
<div class="abs" style="left:905px;top:12px;width:145px;height:20px;background:#3b7ed6;overflow:hidden"><div class="wh"><span style="display:inline-block;transform:scaleX(0.94)">London, Eng</span></div></div>
<div class="abs wd" style="left:905px;top:34px;width:145px;height:24px"></div>
<div class="abs wdt" style="left:904.5px;top:38.5px">Mon, May 20</div>
<div class="abs wdt" style="left:998.5px;top:38.5px">18:40:18</div>
<div class="abs wsup" style="left:987px;top:35.5px">-1</div>
<div class="abs" style="left:1051px;top:12px;width:145px;height:20px;background:#30d0d0;overflow:hidden"><div class="wh"><span style="display:inline-block;transform:scaleX(0.94)">Rabat-Casablanca</span></div></div>
<div class="abs wd" style="left:1051px;top:34px;width:145px;height:24px"></div>
<div class="abs wdt" style="left:1050.5px;top:38.5px">Mon, May 20</div>
<div class="abs wdt" style="left:1151.5px;top:38.5px">18:40</div>
<div class="abs wsup" style="left:1132px;top:35.5px">-1</div>
<div class="abs" style="left:978.5px;top:44.5px;font:bold 10.5px 'Liberation Sans',sans-serif;color:#222;transform:scaleX(.68);transform-origin:0 0;-webkit-text-stroke:.15px #222">JST</div>
<div class="abs" style="left:471px;top:60.8px;font-size:15px;font-family:'Liberation Mono',monospace;color:#dcdcdc;-webkit-text-stroke:.2px #dcdcdc;white-space:nowrap;transform:scaleX(.833);transform-origin:0 0">C:\Users\Roman Dávid&gt;Signal monitoring_PF 450_LC/SK_Eut 8WB-8°W_12 621 Radio Tendance_19.5.2024+</div>
<!-- logo -->
<div class="abs" style="left:573px;top:85px;width:54px;height:52px;background:#fff"></div>
<svg class="abs" style="left:573px;top:85px" width="54" height="52" viewBox="0 0 54 52">
 <ellipse cx="27.2" cy="23.3" rx="23.5" ry="20.2" stroke="#2a2a78" stroke-width="1.15" fill="none"/>
 <rect x="35" y="39" width="14" height="10" fill="#fff"/><rect x="8" y="40" width="8" height="10" fill="#fff"/>
 <rect x="37.5" y="4" width="5" height="5" fill="#fff" transform="rotate(30 40 6.5)"/>
 <rect x="47" y="29" width="5" height="3" fill="#fff"/>
 <path d="M11.5,40 L14,43.5 H40 L43,39" stroke="#2a2a78" stroke-width="1" fill="none"/>
 <path d="M33.5,17 Q37,21 37.5,27" stroke="#c01c2c" stroke-width="1.5" fill="none"/>
 <path d="M36.5,14 Q41,19 41.5,28" stroke="#c01c2c" stroke-width="1.5" fill="none"/>
 <path d="M18.5,6 C22,12 26,25 31,38 M18.5,6 C19,15 21,27 29,38" stroke="#3a3a70" stroke-width=".9" fill="none"/>
 <path d="M25,23 L33,22.5 L28,28" stroke="#5a6a9a" stroke-width=".8" fill="none"/>
 <path d="M21,26 L19.5,33 L15,38 L13,43 M19.5,33 L25,36" stroke="#5a5a8a" stroke-width=".8" fill="none"/>
 <ellipse cx="16.5" cy="36.5" rx="2.2" ry="2.6" stroke="#6a6aa0" stroke-width=".8" fill="none"/>
 <text x="2" y="50.8" font-family="Liberation Serif" font-weight="bold" font-size="8.6" fill="#22226a" textLength="51" lengthAdjust="spacingAndGlyphs"><tspan fill="#c01c2c">DX</tspan>SATCS.COM</text>
</svg>
<!-- status bars -->
 <div class="stat" style="left:13px;background:#8fe88f"><span class="s" style="transform:scaleX(.77);transform-origin:50% 0">PAT (1)</span></div>
 <div class="stat" style="left:219px;background:#fea07a"><span class="s" style="transform:scaleX(.77);transform-origin:50% 0">PMT (0) timeout!</span></div>
 <div class="stat" style="left:424px;background:#fea07a"><span class="s" style="transform:scaleX(.77);transform-origin:50% 0">SDT (0) timeout!</span></div>
 <div class="stat" style="left:630px;background:#fea07a"><span class="s" style="transform:scaleX(.77);transform-origin:50% 0">CAT (0) timeout!</span></div>
 <div class="stat" style="left:835px;background:#f08080"><span class="s" style="transform:scaleX(.77);transform-origin:50% 0">NIT (0)</span></div>


 <!-- status bar -->
 <div class="abs" style="left:1px;top:826px;width:1199px;height:23px;border-top:1px solid #dcdcdc;background:#f0f0f0"></div>
 <div class="abs" style="left:393px;top:829px;width:1px;height:19px;background:#bbb"></div>
 <div class="abs" style="left:793px;top:829px;width:1px;height:19px;background:#bbb"></div>
 <div class="abs" style="left:0;top:831.5px;width:393px;text-align:center;font-size:12.9px;line-height:15px;color:#222;white-space:nowrap"><span class="s" style="transform:scaleX(.745);transform-origin:50% 0">Locked -&gt; Uptime: 24:48:36</span></div>
 <div class="abs" style="left:394px;top:831.5px;width:399px;text-align:center;font-size:12.9px;line-height:15px;color:#222;white-space:nowrap"><span class="s" style="transform:scaleX(.73);transform-origin:50% 0">SYNC 0 | TEI 0 | CC 0</span></div>
 <div class="abs" style="left:794px;top:831.5px;width:395px;text-align:center;font-size:12.9px;line-height:15px;color:#222;white-space:nowrap"><span class="s" style="transform:scaleX(.71);transform-origin:50% 0">Best signal: 21,1 dB (2024-05-20 18:26)</span></div>
 <div class="abs" style="left:1188px;top:829px;width:1px;height:19px;background:#c8c8c8"></div>
 <svg class="abs" style="left:1189px;top:837px" width="11" height="12"><g fill="#b0b0b0"><rect x="7" y="2" width="2" height="2"/><rect x="4" y="5" width="2" height="2"/><rect x="7" y="5" width="2" height="2"/><rect x="1" y="8" width="2" height="2"/><rect x="4" y="8" width="2" height="2"/><rect x="7" y="8" width="2" height="2"/></g></svg>
 <div class="abs" style="left:0;top:849px;width:1200px;height:1px;background:#555"></div>
</div>
</body></html>
